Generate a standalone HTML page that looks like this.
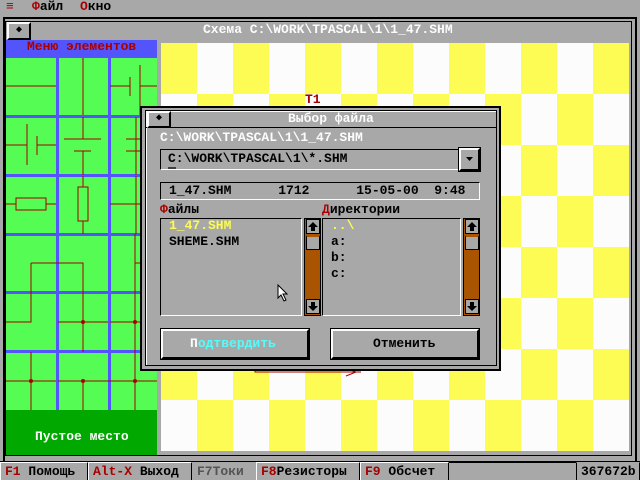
<!DOCTYPE html>
<html><head><meta charset="utf-8"><style>
*{margin:0;padding:0;box-sizing:border-box}
body{width:640px;height:480px;background:#a8a8a8;position:relative;overflow:hidden;font-family:"Liberation Mono","DejaVu Sans Mono",monospace;font-size:13px;font-weight:bold}
.a{position:absolute}
.t{position:absolute;white-space:pre;line-height:14px}
.r{color:#a80000}
.w{color:#fcfcfc}
.k{color:#000}
.sb{position:absolute;top:462px;height:18px;border-top:1px solid #fcfcfc;border-left:1px solid #fcfcfc;border-right:1px solid #000;line-height:17px;white-space:pre;padding-left:4px}
.btn{position:absolute;background:#a8a8a8;border-top:2px solid #fcfcfc;border-left:2px solid #fcfcfc;border-right:2px solid #000;border-bottom:2px solid #000;outline:1px solid #000}
.scr{position:absolute;width:17px;background:#a85400;border:1px solid #000}
.sbx{position:absolute;left:1px;width:14px;height:15px;background:#a8a8a8;border:1px solid #000}
</style></head><body>
<div class="t r" style="left:6px;top:0">≡</div>
<div class="t" style="left:32px;top:0"><span class="r">Ф</span>айл</div>
<div class="t" style="left:80px;top:0"><span class="r">О</span>кно</div>
<!-- main window -->
<div class="a" style="left:3px;top:17px;width:634px;height:446px;border:2px solid #000"></div>
<div class="a" style="left:5px;top:21px;width:627px;height:435px;border:1px solid #000"></div>
<div class="a" style="left:7px;top:22px;width:24px;height:18px;border:2px solid #000;border-top-color:#fcfcfc;border-left-color:#fcfcfc;text-align:center;line-height:13px;font-size:10px">◆</div>
<div class="t w" style="left:203px;top:23px">Схема C:\WORK\TPASCAL\1\1_47.SHM</div>
<!-- checker -->
<svg class="a" style="left:161px;top:43px" width="468" height="408">
<defs><pattern id="p" width="72" height="102" patternUnits="userSpaceOnUse">
<rect width="72" height="102" fill="#fcfcfc"/><rect width="36" height="51" fill="#fcfc54"/><rect x="36" y="51" width="36" height="51" fill="#fcfc54"/></pattern></defs>
<rect width="468" height="408" fill="url(#p)"/>
<text x="144" y="60" fill="#a80000" font-family="Liberation Mono" font-weight="bold" font-size="13">T1</text>
<path d="M94 322V329H200M185 325L195 329L185 333M195 329H200" stroke="#a80000" fill="none"/>
</svg>
<!-- left panel -->
<div class="a" style="left:6px;top:40px;width:151px;height:18px;background:#5454fc"></div>
<div class="t r" style="left:27px;top:40px">Меню элементов</div>
<svg class="a" style="left:6px;top:58px" width="151" height="352">
<rect width="151" height="352" fill="#54fc54"/>
<g fill="#5454fc"><rect x="50" width="3" height="352"/><rect x="102" width="3" height="352"/>
<rect y="57" width="151" height="3"/><rect y="116" width="151" height="3"/><rect y="175" width="151" height="3"/><rect y="233" width="151" height="3"/><rect y="292" width="151" height="3"/></g>
<g stroke="#a80000" fill="none" transform="translate(-6,-58)">
<path d="M6 86H56M83 58V115M110 86H130M130 77V96M140 65V115M140 86H157"/>
<path d="M6 145H27M27 124V165M37 136V155M37 145H56M64 139H101M83 117V139M74 151H91M83 151V175M136 117V175M126 139H157M126 151H140"/>
<rect x="16" y="198" width="30" height="12"/><path d="M6 204H16M46 204H56"/>
<rect x="78" y="187" width="10" height="34"/><path d="M83 176V187M83 221V234M110 204H140M136 176V234"/>
<path d="M31 263H83V322M31 263V322H6M58 322H108M135 234V263H157M110 322H157M135 263V410"/>
<path d="M31 352V410M6 381H56M58 381H157M83 381V410M83 322V352"/>
</g>
<g fill="#a80000" transform="translate(-6,-58)"><circle cx="83" cy="322" r="2"/><circle cx="135" cy="322" r="2"/><circle cx="31" cy="381" r="2"/><circle cx="83" cy="381" r="2"/><circle cx="135" cy="381" r="2"/></g>
</svg>
<div class="a" style="left:6px;top:410px;width:151px;height:45px;background:#00a800"></div>
<div class="t w" style="left:35px;top:430px">Пустое место</div>
<!-- dialog -->
<div class="a" style="left:140px;top:106px;width:361px;height:265px;background:#a8a8a8;border:2px solid #000"></div>
<div class="a" style="left:145px;top:110px;width:352px;height:256px;border:1px solid #000"></div>
<div class="a" style="left:146px;top:111px;width:350px;height:1px;background:#fcfcfc"></div>
<div class="a" style="left:146px;top:111px;width:1px;height:254px;background:#fcfcfc"></div>
<div class="a" style="left:146px;top:127px;width:350px;height:1px;background:#000"></div>
<div class="a" style="left:147px;top:111px;width:24px;height:17px;border:2px solid #000;border-top-color:#fcfcfc;border-left-color:#fcfcfc;text-align:center;line-height:12px;font-size:10px">◆</div>
<div class="t w" style="left:288px;top:112px">Выбор файла</div>
<div class="t w" style="left:160px;top:131px">C:\WORK\TPASCAL\1\1_47.SHM</div>
<div class="a" style="left:160px;top:149px;width:299px;height:21px;border-top:1px solid #000;border-left:1px solid #000;border-bottom:1px solid #fcfcfc;border-right:1px solid #fcfcfc"></div>
<div class="t k" style="left:168px;top:152px">C:\WORK\TPASCAL\1\*.SHM</div>
<div class="a" style="left:168px;top:167px;width:8px;height:2px;background:#404040"></div>
<div class="a" style="left:459px;top:148px;width:21px;height:23px;border:2px solid #000;border-top-color:#fcfcfc;border-left-color:#fcfcfc;outline:1px solid #000"><svg class="a" style="left:4px;top:6px" width="10" height="6"><path d="M1 1H8L4.5 5Z" fill="#000"/></svg></div>
<div class="a" style="left:160px;top:182px;width:320px;height:18px;border-top:1px solid #000;border-left:1px solid #000;border-bottom:1px solid #fcfcfc;border-right:1px solid #fcfcfc"></div>
<div class="t k" style="left:169px;top:184px">1_47.SHM      1712      15-05-00  9:48</div>
<div class="t" style="left:160px;top:203px"><span class="r">Ф</span>айлы</div>
<div class="t" style="left:322px;top:203px"><span class="r">Д</span>иректории</div>
<div class="a" style="left:160px;top:218px;width:142px;height:98px;border-top:1px solid #000;border-left:1px solid #000;border-bottom:1px solid #fcfcfc;border-right:1px solid #fcfcfc"></div>
<div class="t" style="left:169px;top:219px;color:#fcfc54">1_47.SHM</div>
<div class="t k" style="left:169px;top:235px">SHEME.SHM</div>
<div class="a" style="left:322px;top:218px;width:139px;height:98px;border-top:1px solid #000;border-left:1px solid #000;border-bottom:1px solid #fcfcfc;border-right:1px solid #fcfcfc"></div>
<div class="t" style="left:331px;top:219px;color:#fcfc54">..\</div>
<div class="t k" style="left:331px;top:235px">a:</div>
<div class="t k" style="left:331px;top:251px">b:</div>
<div class="t k" style="left:331px;top:267px">c:</div>
<div class="scr" style="left:304px;top:218px;height:98px"><div class="sbx" style="top:0"><svg width="12" height="13"><path d="M6 2L11 7H8V11H4V7H1Z" fill="#000"/></svg></div><div class="sbx" style="top:16px;border-top:2px solid #a85400"></div><div class="sbx" style="top:80px"><svg width="12" height="13"><path d="M6 11L11 6H8V2H4V6H1Z" fill="#000"/></svg></div></div>
<div class="scr" style="left:463px;top:218px;height:98px"><div class="sbx" style="top:0"><svg width="12" height="13"><path d="M6 2L11 7H8V11H4V7H1Z" fill="#000"/></svg></div><div class="sbx" style="top:16px;border-top:2px solid #a85400"></div><div class="sbx" style="top:80px"><svg width="12" height="13"><path d="M6 11L11 6H8V2H4V6H1Z" fill="#000"/></svg></div></div>
<svg class="a" style="left:277px;top:284px" width="12" height="18"><path d="M1 1V14L4 11L7 17L9 16L6 10H10Z" fill="#fcfcfc" stroke="#000"/></svg>
<div class="btn" style="left:161px;top:329px;width:148px;height:30px"></div>
<div class="t" style="left:190px;top:337px;color:#54fcfc"><span class="w">П</span>одтвердить</div>
<div class="btn" style="left:331px;top:329px;width:148px;height:30px"></div>
<div class="t k" style="left:373px;top:337px">Отменить</div>
<!-- status -->
<div class="a" style="left:0;top:461px;width:640px;height:1px;background:#000"></div>
<div class="sb" style="left:0;width:88px"><span class="r">F1</span> Помощь</div>
<div class="sb" style="left:88px;width:104px"><span class="r">Alt-X</span> Выход</div>
<div class="sb" style="left:192px;width:64px;color:#545454;border-color:#a8a8a8">F7Токи</div>
<div class="sb" style="left:256px;width:104px"><span class="r">F8</span>Резисторы</div>
<div class="sb" style="left:360px;width:89px"><span class="r">F9</span> Обсчет</div>
<div class="sb" style="left:576px;width:64px;border-left:1px solid #000;border-top-color:#a8a8a8">367672b</div>
</body></html>
